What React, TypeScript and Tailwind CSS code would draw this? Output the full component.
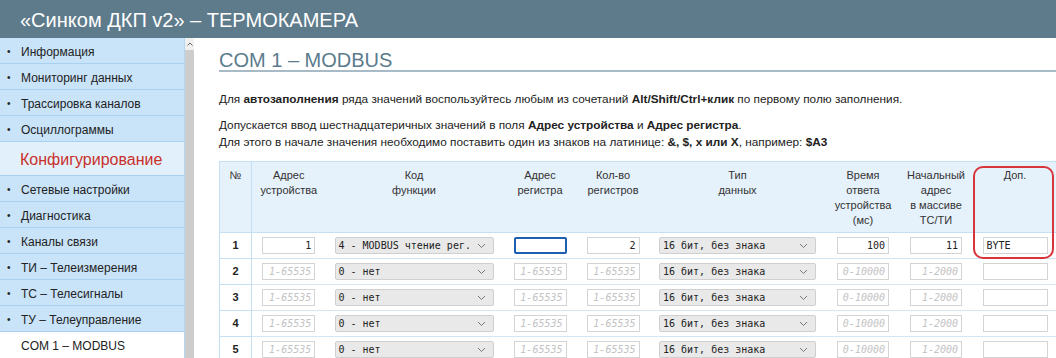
import React from 'react';

const sans = { fontFamily: '"Liberation Sans", Arial, sans-serif' };
const mono = { fontFamily: '"DejaVu Sans Mono", "Liberation Mono", monospace' };

const navTop = ['Информация', 'Мониторинг данных', 'Трассировка каналов', 'Осциллограммы'];
const navBottom = ['Сетевые настройки', 'Диагностика', 'Каналы связи', 'ТИ – Телеизмерения', 'ТС – Телесигналы', 'ТУ – Телеуправление'];

const NavItem = ({ label }: { label: string }) => (
  <div className="h-[26px] flex items-center pt-[2px] bg-[#c9e3f9] border-b border-[#a9d0f0] text-[12px] text-[#222]">
    <span className="w-[21px] pl-[7px] text-[10px]">•</span>
    <span>{label}</span>
  </div>
);

const Chevron = () => (
  <svg width="9" height="6" viewBox="0 0 9 6" className="shrink-0">
    <polyline points="1,1 4.5,4.5 8,1" fill="none" stroke="#777" strokeWidth="1" />
  </svg>
);

const Select = ({ value, w }: { value: string; w: string }) => (
  <div className={`${w} h-[17px] mx-auto flex items-center justify-between bg-[#e9e9e9] border border-[#cfcfcf] rounded-[2px] pl-[3px] pr-[7px] text-[10px] text-[#222]`} style={mono}>
    <span className="whitespace-pre">{value}</span>
    <Chevron />
  </div>
);

const Input = ({ value, placeholder, w, left, focus }: { value?: string; placeholder?: string; w: string; left?: boolean; focus?: boolean }) => (
  <div
    className={`${w} h-[17px] mx-auto flex items-center overflow-hidden bg-white text-[10px] px-[3px] ${left ? 'justify-start' : 'justify-end'} ${focus ? 'border-2 border-[#1b5fae] rounded-[2px]' : 'border border-[#d4d4d4]'}`}
    style={mono}
  >
    {value ? (
      <span className="text-[#222] whitespace-nowrap">{value}</span>
    ) : placeholder ? (
      <span className="italic text-[#c4c4c4] whitespace-nowrap">{placeholder}</span>
    ) : null}
  </div>
);

const rows = [1, 2, 3, 4, 5];

export default function App() {
  return (
    <div className="w-[1056px] h-[358px] overflow-hidden flex flex-col bg-white" style={sans}>
      <div className="h-[38px] shrink-0 bg-[#5e7b8b] flex items-center pl-[20px] pt-[1px] text-white text-[20px]">
        «Синком ДКП v2» – ТЕРМОКАМЕРА
      </div>
      <div className="flex flex-1 min-h-0">
        <div className="w-[185px] shrink-0 flex flex-col border-r border-[#b7d6ee]">
          {navTop.map((l) => <NavItem key={l} label={l} />)}
          <div className="h-[34px] flex items-center pl-[20px] pt-[2px] bg-[#e2f0fc] border-b border-[#a9d0f0] text-[16px] text-[#c9312b]">
            Конфигурирование
          </div>
          {navBottom.map((l) => <NavItem key={l} label={l} />)}
          <div className="h-[26px] flex items-center pl-[21px] pt-[2px] bg-white text-[12px] text-[#222]">COM 1 – MODBUS</div>
        </div>
        <div className="w-[9px] shrink-0 flex flex-col bg-[#cdcdcd]">
          <div className="h-[12px] bg-[#f0f0f0] flex items-center justify-center">
            <svg width="6" height="4" viewBox="0 0 6 4"><polyline points="0.5,3.5 3,1 5.5,3.5" fill="none" stroke="#666" strokeWidth="1" /></svg>
          </div>
        </div>
        <div className="flex-1 min-w-0 pl-[25px] relative overflow-hidden">
          <div className="h-[34px] pt-[10px] border-b-2 border-[#a8bac5] text-[20px] leading-[24px] text-[#5b7c8d]">COM 1 – MODBUS</div>
          <p className="mt-[19px] text-[11.8px] leading-[16px] text-[#222]">
            Для <b>автозаполнения</b> ряда значений воспользуйтесь любым из сочетаний <b>Alt/Shift/Ctrl+клик</b> по первому полю заполнения.
          </p>
          <p className="mt-[10px] text-[11.8px] leading-[17px] text-[#222]">
            Допускается ввод шестнадцатеричных значений в поля <b>Адрес устройства</b> и <b>Адрес регистра</b>.
            <br />
            Для этого в начале значения необходимо поставить один из знаков на латинице: <b>&amp;, $, x или X</b>, например: <b>$A3</b>
          </p>
          <table className="mt-[10px] w-[838px] table-fixed border-collapse text-[11px] text-[#333]">
            <colgroup>
              <col className="w-[32px]" />
              <col className="w-[74px]" />
              <col className="w-[177px]" />
              <col className="w-[75px]" />
              <col className="w-[71px]" />
              <col className="w-[178px]" />
              <col className="w-[73px]" />
              <col className="w-[73px]" />
              <col className="w-[85px]" />
            </colgroup>
            <thead>
              <tr className="bg-[#e5f1fb] h-[71px] align-top leading-[15px]">
                <th className="font-normal pt-[6px] border border-[#c6e0f3]">№</th>
                <th className="font-normal pt-[6px] border-y border-[#c6e0f3]">Адрес<br />устройства</th>
                <th className="font-normal pt-[6px] border-y border-[#c6e0f3]">Код<br />функции</th>
                <th className="font-normal pt-[6px] border-y border-[#c6e0f3]">Адрес<br />регистра</th>
                <th className="font-normal pt-[6px] border-y border-[#c6e0f3]">Кол-во<br />регистров</th>
                <th className="font-normal pt-[6px] border-y border-[#c6e0f3]">Тип<br />данных</th>
                <th className="font-normal pt-[6px] border-y border-[#c6e0f3]">Время<br />ответа<br />устройства<br />(мс)</th>
                <th className="font-normal pt-[6px] border-y border-[#c6e0f3]">Начальный<br />адрес<br />в массиве<br />ТС/ТИ</th>
                <th className="font-normal pt-[6px] border-y border-[#c6e0f3]">Доп.</th>
              </tr>
            </thead>
            <tbody>
              {rows.map((n) => {
                const first = n === 1;
                return (
                  <tr key={n} className="h-[26px]">
                    <td className="text-center font-bold text-[#222] border border-[#c6e0f3]">{n}</td>
                    <td className="border-y border-[#d3e6f5]">
                      <Input w="w-[53px]" value={first ? '1' : undefined} placeholder="1-65535" />
                    </td>
                    <td className="border-y border-[#d3e6f5]">
                      <Select w="w-[159px]" value={first ? '4 - MODBUS чтение рег.' : '0 - нет'} />
                    </td>
                    <td className="border-y border-[#d3e6f5]">
                      <Input w="w-[53px]" focus={first} placeholder={first ? undefined : '1-65535'} />
                    </td>
                    <td className="border-y border-[#d3e6f5]">
                      <Input w="w-[53px]" value={first ? '2' : undefined} placeholder="1-65535" />
                    </td>
                    <td className="border-y border-[#d3e6f5]">
                      <Select w="w-[157px]" value="16 бит, без знака" />
                    </td>
                    <td className="border-y border-[#d3e6f5]">
                      <Input w="w-[52px]" value={first ? '100' : undefined} placeholder="0-10000" />
                    </td>
                    <td className="border-y border-[#d3e6f5]">
                      <Input w="w-[52px]" value={first ? '11' : undefined} placeholder="1-2000" />
                    </td>
                    <td className="border-y border-[#d3e6f5]">
                      <Input w="w-[65px]" left value={first ? 'BYTE' : undefined} />
                    </td>
                  </tr>
                );
              })}
            </tbody>
          </table>
          <div className="absolute left-[779px] top-[128px] w-[81px] h-[93px] border-2 border-[#d8343c] rounded-[10px] pointer-events-none" />
        </div>
      </div>
    </div>
  );
}
